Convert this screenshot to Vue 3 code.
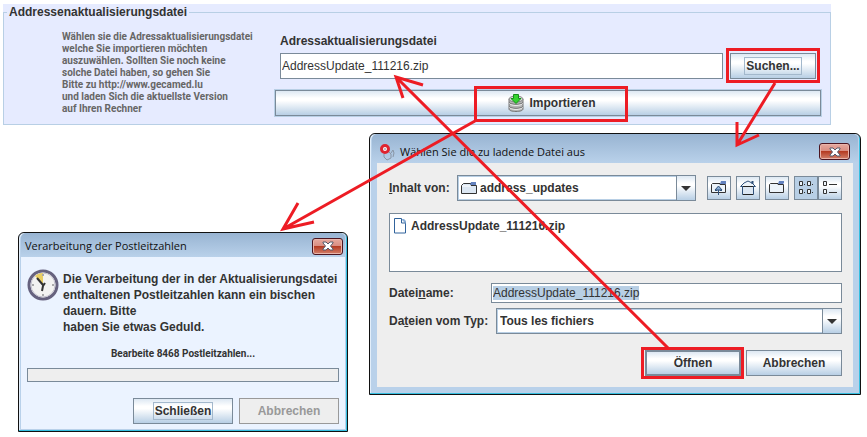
<script setup>
import { onMounted, ref } from 'vue';

const importFile = ref('AddressUpdate_111216.zip');
const fileName = ref('AddressUpdate_111216.zip');
const nameField = ref(null);

const arrows = [
  'M775 83L737 145M737 122V145L759 135',
  'M475 121L283 229M298 203L283 229L314 222',
  'M668 348L396 77M403 98L396 77L423 85',
];

onMounted(() => {
  nameField.value.focus();
  nameField.value.select();
});
</script>

<template>
  <main class="page">
    <section class="panel">
      <fieldset class="group">
        <legend>Addressenaktualisierungsdatei</legend>
        <p class="hint">
          Wählen sie die Adressaktualisierungsdatei<br />
          welche Sie importieren möchten<br />
          auszuwählen. Sollten Sie noch keine<br />
          solche Datei haben, so gehen Sie<br />
          Bitte zu http://www.gecamed.lu<br />
          und laden Sich die aktuellste Version<br />
          auf Ihren Rechner
        </p>
        <div class="import-form">
          <label for="import-file">Adressaktualisierungsdatei</label>
          <div class="file-row">
            <input id="import-file" v-model="importFile" class="field import-field" type="text" />
            <button class="btn search-btn" type="button"><span class="focus-box">Suchen...</span></button>
          </div>
          <button class="btn import-btn" type="button">
            <svg width="16" height="18" viewBox="0 0 16 18" aria-hidden="true">
              <path d="M1 5v10c0 1.500 3 2.500 7 2.500s7-1 7-2.500V5z" fill="#b5b5b5" stroke="#777" />
              <path d="M1.500 8.500c1 2.500 12 2.500 13 0M1.500 12.500c1 2.500 12 2.500 13 0" fill="none" stroke="#666" />
              <path d="M1.500 9.500c1 2.500 12 2.500 13 0M1.500 13.500c1 2.500 12 2.500 13 0" fill="none" stroke="#f2f2f2" />
              <ellipse cx="8" cy="5" rx="7" ry="3" fill="#ddd" stroke="#888" />
              <path d="M5.500.5h5v4h2.500L8 9.500 3 4.500h2.500z" fill="#35d32f" stroke="#149018" />
            </svg>
            Importieren
          </button>
        </div>
      </fieldset>
    </section>

    <div class="windows">
      <section class="window progress-window">
        <header class="titlebar">
          <h2>Verarbeitung der Postleitzahlen</h2>
          <button class="close" type="button" aria-label="Schließen">
            <svg width="12" height="10" viewBox="0 0 12 10" aria-hidden="true">
              <path d="M1 1h3l2 2 2-2h3v1L8.500 5 11 8v1H8L6 7 4 9H1V8l2.500-3L1 2z" fill="#fff" stroke="#555a6b" />
            </svg>
          </button>
        </header>
        <div class="progress-body">
          <div class="message">
            <svg class="clock" width="32" height="32" viewBox="0 0 32 32" aria-hidden="true">
              <circle cx="16" cy="16" r="14" fill="#f3f3f1" stroke="#66627e" stroke-width="3" />
              <circle cx="16" cy="16" r="12" fill="none" stroke="#c5c3cf" />
              <path d="M16 16L8 7C10 5 13 4 16 4z" fill="#e9ce63" />
              <path d="M10 9l6 7M18 14l-2 3-1 5" fill="none" stroke="#333" stroke-width="2" />
              <path d="M16 5v2M16 25v2M5 16h2M25 16h2" stroke="#aaa" stroke-width="2" />
            </svg>
            <p>
              Die Verarbeitung der in der Aktualisierungsdatei<br />
              enthaltenen Postleitzahlen kann ein bischen<br />
              dauern. Bitte<br />
              haben Sie etwas Geduld.
            </p>
          </div>
          <p id="progress-text" class="progress-text">Bearbeite 8468 Postleitzahlen...</p>
          <div class="progress" role="progressbar" aria-labelledby="progress-text"></div>
          <div class="actions">
            <button class="btn wide" type="button"><span class="focus-box">Schließen</span></button>
            <button class="btn wide" type="button" disabled>Abbrechen</button>
          </div>
        </div>
      </section>

      <section class="window chooser-window">
        <header class="titlebar">
          <svg class="app-icon" width="18" height="18" viewBox="0 0 18 18" aria-hidden="true">
            <path d="M10 8l3 3M13 10l2-3 1 3-1 4M6 11v3l3 3 4-2v-4" fill="none" stroke="#8995a5" />
            <circle cx="7" cy="6" r="3.500" fill="#fff" stroke="#df2430" stroke-width="3" />
            <circle cx="7" cy="6" r="1" fill="#a9a9b5" />
          </svg>
          <h2>Wählen Sie die zu ladende Datei aus</h2>
          <button class="close" type="button" aria-label="Schließen">
            <svg width="12" height="10" viewBox="0 0 12 10" aria-hidden="true">
              <path d="M1 1h3l2 2 2-2h3v1L8.500 5 11 8v1H8L6 7 4 9H1V8l2.500-3L1 2z" fill="#fff" stroke="#555a6b" />
            </svg>
          </button>
        </header>
        <div class="chooser-body">
          <div class="folder-row">
            <label for="folder"><u>I</u>nhalt von:</label>
            <div class="combo">
              <svg class="combo-icon" width="16" height="14" viewBox="0 0 16 14" aria-hidden="true">
                <path d="M.5 12.500V4.500l2-2H10V4.500h5.500v8z" fill="#dce7f3" stroke="#333" />
                <path d="M1 5h9" stroke="#fff" />
                <path d="M10 1h5v3H9z" fill="#6382bf" />
              </svg>
              <select id="folder"><option>address_updates</option></select>
              <span class="arrow"></span>
            </div>
            <div class="tools">
              <button class="tool" type="button" aria-label="Übergeordneter Ordner">
                <svg width="16" height="16" viewBox="0 0 16 16" aria-hidden="true">
                  <path d="M.5 12.500v-8l1-1H9v1h5.500v8z" fill="#edf4fa" stroke="#333" />
                  <path d="M10 1h5v3H9z" fill="#6382bf" />
                  <path d="M4 10.500h2L7.500 7 9 10.500h2M7.500 7v8" fill="none" stroke="#31527b" />
                  <path d="M7.500 6l3.500 4H4z" fill="#8aaed6" stroke="#31527b" />
                </svg>
              </button>
              <button class="tool" type="button" aria-label="Startordner">
                <svg width="16" height="16" viewBox="0 0 16 16" aria-hidden="true">
                  <path d="M2.500 6v8.500h11V6" fill="#dce7f3" stroke="#31527b" />
                  <path d="M.5 6.500L4 3l4-2 4 2 3.500 3.500z" fill="#edf4fa" stroke="#31527b" />
                  <path d="M3 6.500h10M3 14.500h10" stroke="#222" />
                  <path d="M12.500 1v3" stroke="#31527b" stroke-width="2" />
                </svg>
              </button>
              <button class="tool" type="button" aria-label="Neuer Ordner">
                <svg width="16" height="16" viewBox="0 0 16 16" aria-hidden="true">
                  <path d="M.5 12.500v-8l1-1H9v1h5.500v8z" fill="#edf4fa" stroke="#333" />
                  <path d="M10 1h5v2l-1 1H9z" fill="#6382bf" />
                </svg>
              </button>
              <div class="view-toggle">
                <button class="tool selected" type="button" aria-label="Liste">
                  <svg width="16" height="16" viewBox="0 0 16 16" aria-hidden="true">
                    <path d="M1.500 1.500h3v4h-3zM9.500 1.500h3v4h-3zM1.500 9.500h3v4h-3zM9.500 9.500h3v4h-3z" fill="#edf4fa" stroke="#333" />
                    <path d="M6 4.500h1M14 4.500h1M6 12.500h1M14 12.500h1" stroke="#333" />
                  </svg>
                </button>
                <button class="tool" type="button" aria-label="Details">
                  <svg width="16" height="16" viewBox="0 0 16 16" aria-hidden="true">
                    <path d="M1.500 1.500h3v4h-3zM1.500 9.500h3v4h-3z" fill="#edf4fa" stroke="#333" />
                    <path d="M7 4.500h8M7 12.500h8" stroke="#333" />
                  </svg>
                </button>
              </div>
            </div>
          </div>

          <ul class="file-list">
            <li>
              <svg width="14" height="16" viewBox="0 0 14 16" aria-hidden="true">
                <path d="M1.500.5h7l4 4v10.500h-11z" fill="#fff" stroke="#31639c" />
                <path d="M8 1l5 5V3l-2-2z" fill="#8aaed6" />
                <path d="M8.500 1v4h4" fill="none" stroke="#31639c" />
              </svg>
              AddressUpdate_111216.zip
            </li>
          </ul>

          <div class="name-row">
            <label for="file-name">Datei<u>n</u>ame:</label>
            <input id="file-name" ref="nameField" v-model="fileName" class="field name-field" type="text" />
          </div>
          <div class="type-row">
            <label for="file-type">Da<u>t</u>eien vom Typ:</label>
            <div class="combo">
              <select id="file-type"><option>Tous les fichiers</option></select>
              <span class="arrow"></span>
            </div>
          </div>
          <div class="actions">
            <button class="btn default" type="button">Öffnen</button>
            <button class="btn" type="button">Abbrechen</button>
          </div>
        </div>
      </section>
    </div>

    <svg class="marks" viewBox="0 0 867 437" preserveAspectRatio="none" aria-hidden="true">
      <rect x="727.500" y="49.500" width="91" height="32" />
      <rect x="475.500" y="87.500" width="151" height="33" />
      <rect x="642.500" y="348.500" width="100" height="29" />
      <path v-for="arrow in arrows" :key="arrow" :d="arrow" />
    </svg>
  </main>
</template>

<style>
body {
  margin: 0;
  background: #fff;
}
</style>

<style scoped>
* {
  box-sizing: border-box;
}

.page {
  position: relative;
  padding: 4px 6px 5px 3px;
  color: #333;
  font: bold 12px/16px "Liberation Sans", Arial, sans-serif;
}

p,
h2,
ul {
  margin: 0;
  padding: 0;
}

button,
input,
select {
  margin: 0;
  color: inherit;
  font: inherit;
  outline: none;
}

.panel {
  margin-right: 30px;
  background: #e6ebff;
}

.group {
  display: grid;
  grid-template-columns: 212px 1fr;
  min-width: 0;
  margin: 0;
  padding: 9px 8px 7px 58px;
  border: 1px solid #b8cfe5;
}

legend {
  margin-left: -55px;
  padding: 0 2px;
}

.hint {
  padding-top: 2px;
  color: #666;
  font: bold 10px/12px Roboto, sans-serif;
}

.import-form {
  display: flex;
  flex-direction: column;
}

.import-form label {
  margin: 4px 6px;
}

.file-row {
  display: flex;
  gap: 7px;
  padding: 0 6px;
}

.field {
  flex: 1;
  min-width: 0;
  padding: 0 1px;
  border: 1px solid #7a8a99;
  background: #fff;
  font-weight: normal;
}

.field::selection {
  background: #b8cfe5;
  color: #333;
}

.import-field {
  height: 26px;
}

.btn {
  display: flex;
  align-items: center;
  justify-content: center;
  width: 96px;
  height: 26px;
  padding: 0;
  border: 1px solid #7a8a99;
  background: linear-gradient(#dde8f3, #fff 30%, #fff 40%, #b8cfe5);
}

.btn.search-btn {
  width: 86px;
}

.btn.import-btn {
  gap: 5px;
  width: 100%;
  height: 28px;
  margin-top: 10px;
  padding-left: 8px;
  border: 2px solid #7a8a99;
  outline: 1px solid #b8cfe5;
  outline-offset: -1px;
}

.btn.wide {
  width: 100px;
}

.btn.default {
  border-width: 2px;
}

.btn:disabled {
  border-color: #999;
  background: #eee;
  color: #999;
}

.focus-box {
  padding: 0 1px;
  border: 1px solid #a3b8cc;
}

.windows {
  display: grid;
  grid-template-columns: 330fr 492fr;
  align-items: start;
  gap: 21px;
  padding: 8px 0 0 15px;
}

.window {
  border: 1px solid #111;
  border-radius: 6px 6px 0 0;
  background: #b9d1ea;
  box-shadow: inset -1px -1px #35bfe0, inset 1px 1px #e2eefa;
}

.titlebar {
  display: flex;
  align-items: center;
  color: #111;
  background: linear-gradient(#98b4d2, #b9d1ea);
  border-radius: 5px 5px 0 0;
}

.titlebar h2 {
  flex: 1;
  font: 11px/16px "Open Sans", "Noto Sans", sans-serif;
  white-space: nowrap;
}

.app-icon {
  margin-right: 4px;
}

.close {
  display: flex;
  align-items: center;
  justify-content: center;
  width: 31px;
  height: 17px;
  padding: 0;
  border: 1px solid #4c1520;
  border-radius: 3px;
  background: linear-gradient(#e6a99f, #d98c80 48%, #b53b23 50%, #d3806b);
  box-shadow: inset 0 0 0 1px #e9b4aa;
}

.progress-window {
  margin-top: 99px;
}

.progress-window .titlebar {
  height: 24px;
  margin: 0 2px;
  padding: 2px 2px 0 4px;
}

.progress-body {
  margin: 0 2px 2px;
  padding: 12px 6px 5px;
  background: #ebf3ff;
}

.message {
  display: flex;
  gap: 4px;
}

.message p {
  margin-top: 2px;
  white-space: nowrap;
}

.clock {
  flex: none;
}

.progress-text {
  margin: 13px 0 8px;
  font: bold 10px/12px Roboto, sans-serif;
  text-align: center;
}

.progress {
  height: 14px;
  border: 1px solid #7a8a99;
  background: #eee;
}

.actions {
  display: flex;
  justify-content: flex-end;
  gap: 6px;
  margin-top: 16px;
}

.chooser-window .titlebar {
  height: 29px;
  margin: 0 2px;
  padding: 6px 8px 0 6px;
}

.chooser-body {
  margin: 0 7px 7px;
  padding: 12px 11px 11px 12px;
  background: #eee;
}

.chooser-body .actions {
  gap: 5px;
}

.folder-row,
.name-row,
.type-row {
  display: flex;
  align-items: center;
}

.folder-row label {
  width: 68px;
}

.combo {
  display: flex;
  flex: 1;
  align-items: center;
  min-width: 0;
  height: 26px;
  border: 1px solid #7a8a99;
  background: #fff;
  box-shadow: inset 1px 1px #b8cfe5, inset -1px -1px #b8cfe5;
}

.combo-icon {
  flex: none;
  margin-left: 3px;
}

.combo select {
  flex: 1;
  min-width: 0;
  padding: 0 3px;
  border: 0;
  background: transparent;
  appearance: none;
}

.arrow {
  display: flex;
  align-items: center;
  justify-content: center;
  width: 19px;
  height: 24px;
  border-left: 1px solid #7a8a99;
  background: linear-gradient(#dde8f3, #fff 30%, #fff 40%, #b8cfe5);
}

.arrow::after {
  border: 5px solid transparent;
  border-top-color: #333;
  border-bottom: 0;
  content: "";
}

.tools {
  display: flex;
  gap: 5px;
  margin-left: 11px;
}

.view-toggle {
  display: flex;
}

.tool {
  display: flex;
  align-items: center;
  justify-content: center;
  width: 24px;
  height: 24px;
  padding: 0;
  border: 1px solid #7a8a99;
  background: linear-gradient(#dde8f3, #fff 30%, #fff 40%, #b8cfe5);
}

.tool.selected {
  background: #b8cfe5;
}

.file-list {
  height: 59px;
  margin: 12px 0 11px;
  padding: 4px 3px;
  border: 1px solid #7a8a99;
  background: #fff;
  list-style: none;
}

.file-list li {
  display: flex;
  align-items: center;
  gap: 4px;
}

.name-row label {
  width: 102px;
}

.name-field {
  height: 20px;
  line-height: 18px;
}

.type-row {
  margin-top: 5px;
}

.type-row label {
  width: 107px;
}

.marks {
  position: absolute;
  inset: 0;
  width: 100%;
  height: 100%;
  pointer-events: none;
  fill: none;
  stroke: #ed1c24;
  stroke-width: 3px;
}
</style>
